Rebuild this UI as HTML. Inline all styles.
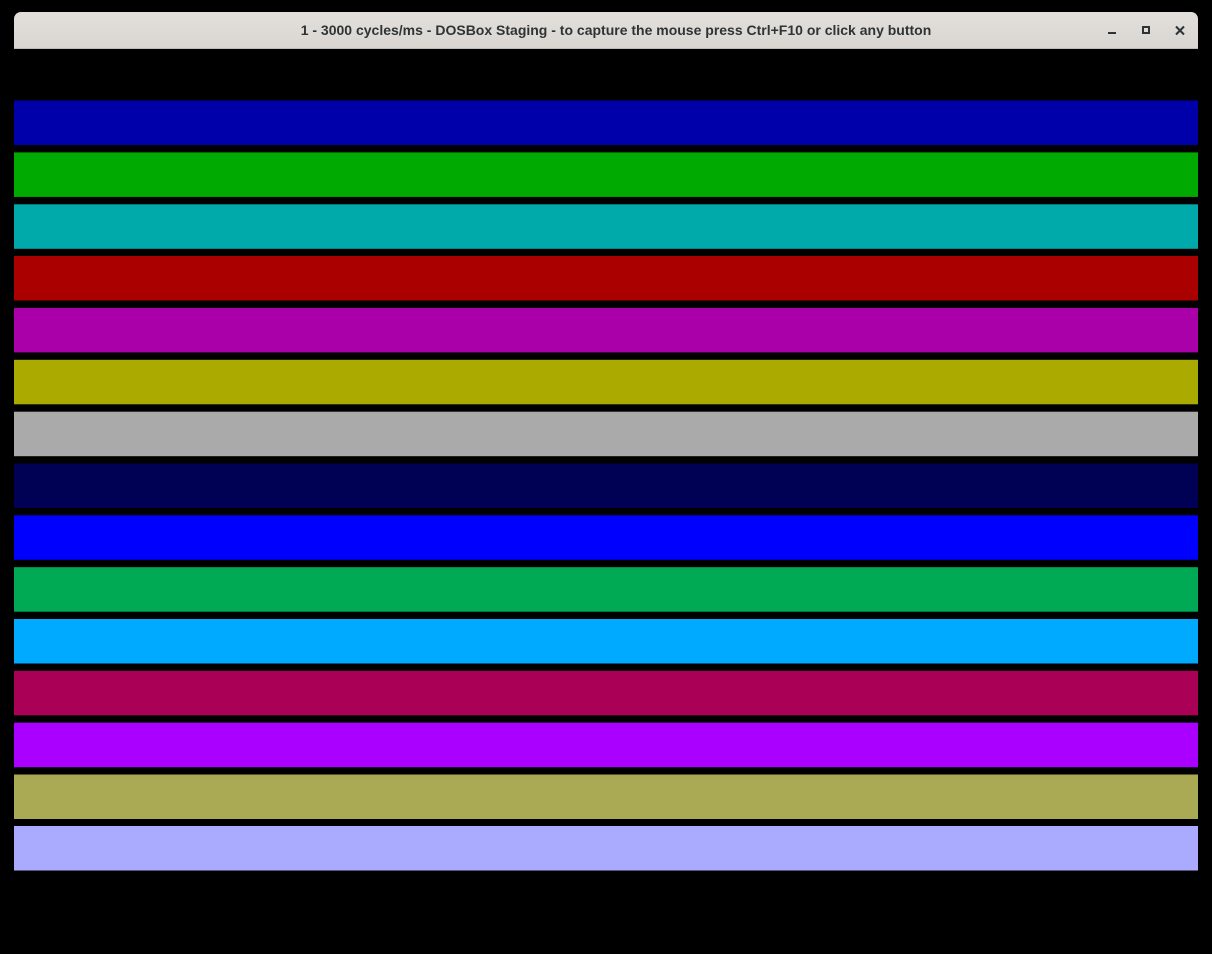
<!DOCTYPE html>
<html>
<head>
<meta charset="utf-8">
<style>
html,body{margin:0;padding:0;background:#000;width:1212px;height:954px;overflow:hidden}
#tb{position:absolute;left:14px;top:12px;width:1184px;height:36px;background:linear-gradient(#e3e0dc,#d9d6d2);border-radius:7px 7px 0 0;border-bottom:1px solid #bdb9b5}
#t{position:absolute;left:0;top:21px;width:1232px;text-align:center;font:bold 14px "Liberation Sans",sans-serif;color:#2e3436;white-space:nowrap;line-height:18px}
svg{position:absolute;left:0;top:0}
</style>
</head>
<body>
<div id="tb"></div>
<div id="t">1 - 3000 cycles/ms - DOSBox Staging - to capture the mouse press Ctrl+F10 or click any button</div>
<svg width="1212" height="954" viewBox="0 0 1212 954">
<g>
<rect x="14" y="100.5" width="1184" height="44.5" fill="#0000aa"/>
<rect x="14" y="152.4" width="1184" height="44.5" fill="#00aa00"/>
<rect x="14" y="204.3" width="1184" height="44.5" fill="#00aaaa"/>
<rect x="14" y="256" width="1184" height="44.5" fill="#aa0000"/>
<rect x="14" y="307.9" width="1184" height="44.5" fill="#aa00aa"/>
<rect x="14" y="359.8" width="1184" height="44.5" fill="#aaaa00"/>
<rect x="14" y="411.7" width="1184" height="44.5" fill="#aaaaaa"/>
<rect x="14" y="463.5" width="1184" height="44.5" fill="#000055"/>
<rect x="14" y="515.3" width="1184" height="44.5" fill="#0000ff"/>
<rect x="14" y="567.2" width="1184" height="44.5" fill="#00aa55"/>
<rect x="14" y="619" width="1184" height="44.5" fill="#00aaff"/>
<rect x="14" y="670.8" width="1184" height="44.5" fill="#aa0055"/>
<rect x="14" y="722.7" width="1184" height="44.5" fill="#aa00ff"/>
<rect x="14" y="774.5" width="1184" height="44.5" fill="#aaaa55"/>
<rect x="14" y="826" width="1184" height="44.5" fill="#aaaaff"/>
</g>
<g fill="none" stroke="#2e3436" stroke-width="2">
<path d="M1108 33H1116"/>
<rect x="1143" y="27" width="6" height="6"/>
<path d="M1176 26.500L1184 34.500M1184 26.500L1176 34.500"/>
</g>
</svg>
</body>
</html>
